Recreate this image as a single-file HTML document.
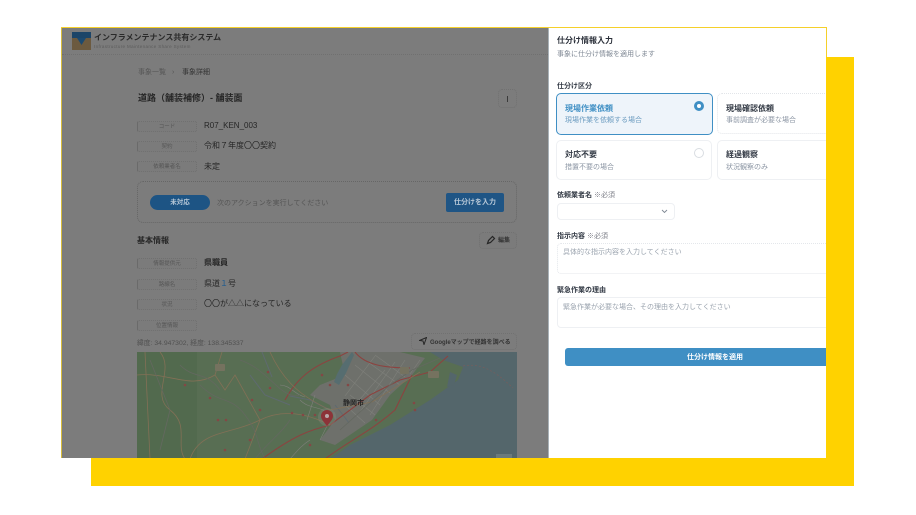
<!DOCTYPE html>
<html lang="ja"><head><meta charset="utf-8"><title>仕分け情報入力</title>
<style>
html,body{margin:0;padding:0;width:916px;height:515px;background:#fff;overflow:hidden}
body{font-family:"Liberation Sans","Noto Sans CJK JP",sans-serif;position:relative}
div,span{position:absolute;box-sizing:border-box;white-space:nowrap}
.t{line-height:12px;height:12px;transform:translateY(-5px)}
.lbl{left:75px;width:60px;height:11px;border:1px dotted #707070;border-left:1px solid #6a6a6a;border-radius:2px;background:#7b7b7b;color:#565656;font-size:5.5px;line-height:10px;text-align:center}
.val{left:142px;font-size:8px;color:#262626}
.card{border:1px solid #eef0f3;border-radius:5px;background:#fff;width:156px;height:41px}
.ct{font-size:8px;font-weight:700;color:#333a45}
.cs{font-size:7px;color:#8b95a3}
.flabel{font-size:7px;font-weight:700;color:#333a45;left:9px}
.req{font-weight:400;color:#7d7f88}
.ph{font-size:7px;color:#9aa3ae;left:15px}
.box{left:9px;width:290px;height:31px;border:1px dotted #e4e7eb;border-radius:4px;background:#fff}
#win{filter:blur(.35px)}
</style></head><body>
<div style="left:91px;top:57px;width:763px;height:429px;background:#ffd200"></div>
<div id="win" style="left:61px;top:27px;width:765px;height:431px;overflow:hidden;background:#7c7c7c;border-left:1px solid #d8bd3a">
<div style="left:0;top:1px;width:764px;height:430px">
  <!-- header -->
  <div style="left:0;top:26px;width:486px;height:1px;border-top:1px dotted #707070"></div>
  <svg style="position:absolute;left:10px;top:3px" width="19" height="20" viewBox="0 0 19 20"><rect y="1" width="19" height="18" fill="#6c5a3f"/><rect y="1" width="19" height="6" fill="#1c4568"/><path d="M5 7h9l-4.500 7z" fill="#1c4a70"/></svg>
  <div class="t" style="left:32px;top:9px;font-size:8px;font-weight:700;color:#2a2a2a">インフラメンテナンス共有システム</div>
  <div class="t" style="left:32px;top:17.500px;font-size:4.500px;letter-spacing:.35px;color:#5c5c5c">Infrastructure Maintenance Share System</div>
  <!-- breadcrumb -->
  <div class="t" style="left:76px;top:44px;font-size:7px;color:#565656">事象一覧</div>
  <div class="t" style="left:110px;top:44px;font-size:7px;color:#565656">›</div>
  <div class="t" style="left:120px;top:44px;font-size:7px;color:#333">事象詳細</div>
  <div class="t" style="left:76px;top:69px;font-size:9px;font-weight:700;color:#262626">道路（舗装補修）- 舗装面</div>
  <div style="left:436px;top:61px;width:19px;height:19px;border:1px dotted #717171;border-radius:4px"></div>
  <div style="left:445px;top:68px;width:1.200px;height:6px;background:#3a3a3a"></div>
  <!-- top fields -->
  <div class="lbl" style="top:93px">コード</div><div class="t val" style="top:97px">R07_KEN_003</div>
  <div class="lbl" style="top:113px">契約</div><div class="t val" style="top:117px">令和７年度〇〇契約</div>
  <div class="lbl" style="top:133px">依頼業者名</div><div class="t val" style="top:138px">未定</div>
  <!-- action card -->
  <div style="left:75px;top:153px;width:380px;height:42px;border:1px dotted #666;border-radius:6px"></div>
  <div style="left:88px;top:167px;width:60px;height:15px;border-radius:8px;background:#1d5484;color:#b9c9d8;font-size:6.500px;font-weight:700;line-height:15px;text-align:center">未対応</div>
  <div class="t" style="left:155px;top:175px;font-size:7px;color:#555">次のアクションを実行してください</div>
  <div style="left:384px;top:165px;width:58px;height:19px;border-radius:2px;background:#1f5585;color:#b9c9d8;font-size:7px;font-weight:700;line-height:19px;text-align:center">仕分けを入力</div>
  <!-- basic -->
  <div class="t" style="left:75px;top:212px;font-size:8px;font-weight:700;color:#262626">基本情報</div>
  <div style="left:417px;top:204px;width:38px;height:17px;border:1px dotted #717171;border-radius:4px;background:#7b7b7b"></div>
  <svg style="position:absolute;left:424px;top:207px" width="10" height="10" viewBox="0 0 10 10"><path d="M1.500 8.500l1-3 4-4 2 2-4 4z" fill="none" stroke="#262626" stroke-width="1.200"/></svg>
  <div class="t" style="left:436px;top:212px;font-size:6px;font-weight:700;color:#333">編集</div>
  <div class="lbl" style="top:230px">情報提供元</div><div class="t val" style="top:234px;font-weight:700">県職員</div>
  <div class="lbl" style="top:251px">路線名</div><div class="t val" style="top:255px">県道<span style="position:static;color:#1f5b90">１</span>号</div>
  <div class="lbl" style="top:271px">状況</div><div class="t val" style="top:275px">〇〇が△△になっている</div>
  <div class="lbl" style="top:292px">位置情報</div>
  <div class="t" style="left:75px;top:315px;font-size:6.800px;color:#505050">緯度: 34.947302, 経度: 138.345337</div>
  <div style="left:349px;top:305px;width:106px;height:17px;border:1px dotted #717171;border-radius:4px"></div>
  <svg style="position:absolute;left:357px;top:309px" width="8" height="8" viewBox="0 0 8 8"><path d="M.5 3.500L7.500 .5 5 7.500 4 4z" fill="none" stroke="#262626"/></svg>
  <div class="t" style="left:368px;top:314px;font-size:6px;font-weight:700;color:#333">Googleマップで経路を調べる</div>
  <!-- map -->
  <svg style="position:absolute;left:75px;top:324px" width="380" height="107" viewBox="137 352 380 107">
    <rect x="137" y="352" width="380" height="107" fill="#586e53"/>
    <rect x="137" y="352" width="60" height="107" fill="#526a4e"/>
    <path d="M430 352L443 360 463 367 458 380 430 400 390 425 350 445 330 459 517 459 517 352z" fill="#54666b"/>
    <path d="M450 372l7 3-3 10-7 2z" fill="#54666b"/>
    <path d="M340 352L400 352 425 358 412 375 390 395 372 420 335 445 320 440 335 420 330 405 310 395 320 385 345 375z" fill="#6e706b"/>
    <path d="M352 352l-10 13-5 9-3 8 5 3 7-12 8-18z" fill="#566d70"/>
    <g fill="none" stroke="#5f6a70" stroke-width="1">
      <path d="M290 396l20 4 16 8 8 4"/><path d="M335 405l8 10 6 8"/>
      <path d="M250 375l15 20 25 10"/><path d="M262 352l10 25"/>
    </g>
    <g fill="none" stroke="#7f807b" stroke-width=".6">
      <path d="M345 375l35 30M355 365l35 28M365 360l35 25M350 395l25 20M345 405l20 18M375 355l30 22"/>
      <path d="M385 370l-30 35M395 362l-35 50M405 360l-35 55M375 356l-30 40"/>
      <path d="M420 360l-10 14M330 420l-10 20M315 395l-8 25"/>
      <path d="M300 400c10 10 20 5 30 15M280 385c10 0 15 10 25 12M310 440c-8 5-12 10-20 19"/>
    </g>
    <g fill="none" stroke="#8c4340" stroke-width="1.100">
      <path d="M285 400C297 378 312 366 340 356L348 352"/>
      <path d="M262 459C295 435 310 430 330 425L370 395 400 380 430 372 448 356"/>
      <path d="M325 459C350 440 370 432 395 410L412 375"/>
      <path d="M355 352C365 365 385 368 410 368"/>
    </g>
    <g fill="none" stroke="#837056" stroke-width=".8">
      <path d="M137 375C170 372 190 390 215 375L225 390 235 375 260 420 245 459"/>
      <path d="M270 352C285 385 305 398 330 410L372 402 420 372"/>
      <path d="M190 459C200 430 230 435 260 420 290 405 320 420 330 425"/>
      <path d="M145 352L150 459"/><path d="M222 352L215 375"/>
      <path d="M160 352C175 370 150 395 170 410S175 445 185 459"/>
    </g>
    <g fill="none" stroke="#646860" stroke-width=".8">
      <path d="M340 430L390 385 412 370 440 358"/>
      <path d="M150 360l20 50-10 40M240 360c30 10 40 40 60 35"/>
      <path d="M200 385c20 20 30 10 45 30s10 25 20 44M290 420c-10 15-20 20-35 39M180 365c15 15 25 5 40 25"/>
    </g>
    <path d="M463 366c20-4 35 8 50 22" fill="none" stroke="#7b5d5b" stroke-width=".6" stroke-dasharray="2 2"/>
    <g fill="#844745"><circle cx="218" cy="420" r="1.300"/><circle cx="226" cy="420" r="1.300"/><circle cx="260" cy="410" r="1.300"/><circle cx="252" cy="400" r="1.300"/><circle cx="268" cy="372" r="1.300"/><circle cx="292" cy="413" r="1.300"/><circle cx="303" cy="415" r="1.300"/><circle cx="315" cy="415" r="1.300"/><circle cx="322" cy="375" r="1.300"/><circle cx="330" cy="385" r="1.300"/><circle cx="348" cy="385" r="1.300"/><circle cx="376" cy="420" r="1.300"/><circle cx="414" cy="403" r="1.300"/><circle cx="415" cy="410" r="1.300"/><circle cx="270" cy="388" r="1.300"/><circle cx="210" cy="398" r="1.300"/><circle cx="185" cy="385" r="1.300"/><circle cx="310" cy="445" r="1.300"/><circle cx="250" cy="440" r="1.300"/><circle cx="225" cy="450" r="1.300"/></g>
    <rect x="215" y="364" width="10" height="7" rx="1" fill="#75725f"/><rect x="400" y="367" width="9" height="7" rx="1" fill="#75725f"/><rect x="428" y="371" width="11" height="7" rx="1" fill="#75725f"/>
    <text x="343" y="405" font-size="7" font-weight="700" fill="#262626" font-family="'Liberation Sans','Noto Sans CJK JP',sans-serif">静岡市</text>
    <circle cx="327" cy="417" r="9" fill="#8f8f88" opacity=".3"/>
    <path d="M327 426c-4-5-6-7-6-10a6 6 0 0 1 12 0c0 3-2 5-6 10z" fill="#8c3338"/><circle cx="327" cy="416" r="2" fill="#b8a8a8"/>
    <rect x="496" y="454" width="16" height="6" fill="#6c7a7c"/>
  </svg>
  <!-- panel -->
  <div style="left:486px;top:-1px;width:279px;height:431px;background:#fff;border-left:1px solid #a9b2b8">
  <div style="left:0;top:1px;width:278px;height:430px">
    <div class="t" style="left:8px;top:12px;font-size:8px;font-weight:700;color:#2b303a">仕分け情報入力</div>
    <div class="t" style="left:8px;top:26px;font-size:7px;color:#7f8894">事象に仕分け情報を適用します</div>
    <div class="t flabel" style="left:8px;top:58px">仕分け区分</div>
    <div class="card" style="left:7px;top:65px;height:42px;width:157px;background:#eef4fa;border:1.500px solid #3f8fc4"></div>
    <div class="t ct" style="left:16px;top:79.500px;color:#3f8fc4">現場作業依頼</div>
    <div class="t cs" style="left:16px;top:92px;color:#6c9cc0">現場作業を依頼する場合</div>
    <div style="left:144.500px;top:73px;width:10px;height:10px;border-radius:50%;border:3px solid #3f8fc4;background:#fff"></div>
    <div class="card" style="left:168px;top:65px;width:150px;border-style:dotted;border-color:#e2e5e9"></div>
    <div class="t ct" style="left:177px;top:79.500px">現場確認依頼</div>
    <div class="t cs" style="left:177px;top:92px">事前調査が必要な場合</div>
    <div class="card" style="left:7px;top:112px;height:40px"></div>
    <div class="t ct" style="left:16px;top:126px">対応不要</div>
    <div class="t cs" style="left:16px;top:139px">措置不要の場合</div>
    <div style="left:144.500px;top:120px;width:10px;height:10px;border-radius:50%;border:1px solid #d9dde2;background:#fff"></div>
    <div class="card" style="left:168px;top:112px;width:150px;height:40px"></div>
    <div class="t ct" style="left:177px;top:126px">経過観察</div>
    <div class="t cs" style="left:177px;top:139px">状況観察のみ</div>
    <div class="t flabel" style="left:8px;top:167px">依頼業者名 <span class="req" style="position:static">※必須</span></div>
    <div class="box" style="left:8px;top:175px;width:118px;height:17px;border:1px solid #eef0f3"></div>
    <svg style="position:absolute;left:112px;top:181px" width="7" height="5" viewBox="0 0 7 5"><path d="M1 1l2.500 2.500L6 1" fill="none" stroke="#7f8894" stroke-width=".9"/></svg>
    <div class="t flabel" style="left:8px;top:208px">指示内容 <span class="req" style="position:static">※必須</span></div>
    <div class="box" style="left:8px;top:215px"></div>
    <div class="t ph" style="left:14px;top:224px">具体的な指示内容を入力してください</div>
    <div class="t flabel" style="left:8px;top:262px">緊急作業の理由</div>
    <div class="box" style="left:8px;top:269px;border-style:solid;border-color:#eef0f3"></div>
    <div class="t ph" style="left:14px;top:279px">緊急作業が必要な場合、その理由を入力してください</div>
    <div style="left:16px;top:320px;width:270px;height:18px;background:#3f8fc4;border-radius:3px 0 0 3px"></div>
    <div class="t" style="left:138px;top:329px;font-size:7px;font-weight:700;color:#fff">仕分け情報を適用</div>
  </div>
  </div>
</div>
</div>
<div style="left:61px;top:27px;width:766px;height:1px;background:#f5d02a"></div>
<div style="left:826px;top:27px;width:1px;height:30px;background:#f5d02a"></div>
</body></html>
